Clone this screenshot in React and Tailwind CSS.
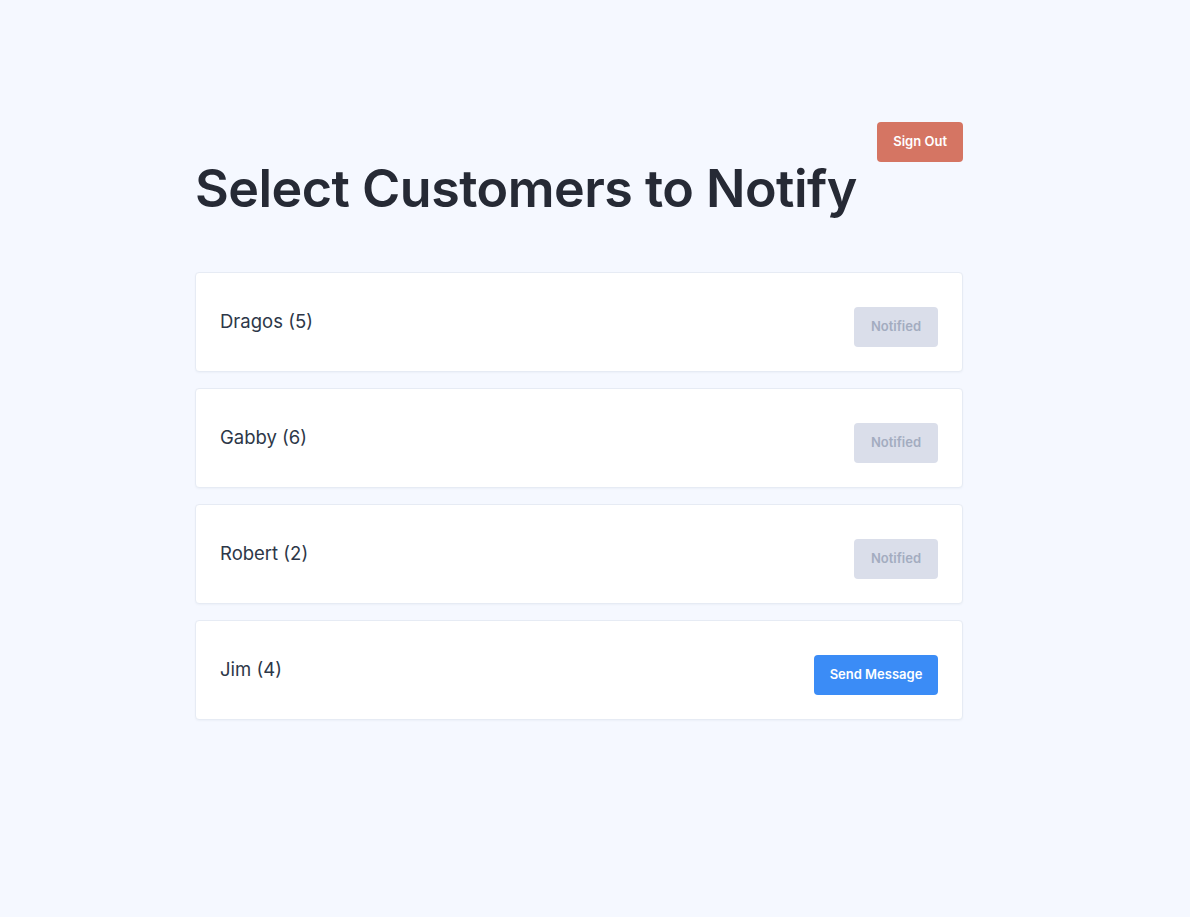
const customers = [
  { name: 'Dragos', count: 5, notified: true },
  { name: 'Gabby', count: 6, notified: true },
  { name: 'Robert', count: 2, notified: true },
  { name: 'Jim', count: 4, notified: false },
];

const App = () => {
  return (
    <div
      className="min-h-screen bg-[#f5f8ff] pt-[122px]"
      style={{ fontFamily: 'Inter, "Noto Sans", sans-serif' }}
    >
      <div className="ml-[195px] w-[768px]">
        <div className="flex justify-end">
          <button className="h-10 rounded bg-[#d57563] px-4 text-[13px] font-semibold text-white">
            Sign Out
          </button>
        </div>
        <h1 className="-mt-[4px] text-[52px] font-semibold leading-[62px] tracking-[-0.01em] text-[#262a35]">
          Select Customers to Notify
        </h1>
        <div className="mt-[52px] flex flex-col gap-4">
          {customers.map((c) => (
            <div
              key={c.name}
              className="flex h-[100px] items-center justify-between rounded border border-[#e6ebf4] bg-white px-6 shadow-[0_1px_2px_rgba(30,40,80,0.04)]"
            >
              <span className="text-[18.5px] text-[#2d3748]">
                {c.name} ({c.count})
              </span>
              {c.notified ? (
                <button className="mt-[10px] h-10 w-[84px] rounded bg-[#dadeea] text-[13px] font-semibold text-[#a3acc0]">
                  Notified
                </button>
              ) : (
                <button className="mt-[10px] h-10 w-[124px] rounded bg-[#3b8cf6] text-[13px] font-semibold text-white">
                  Send Message
                </button>
              )}
            </div>
          ))}
        </div>
      </div>
    </div>
  );
};

export default App;
